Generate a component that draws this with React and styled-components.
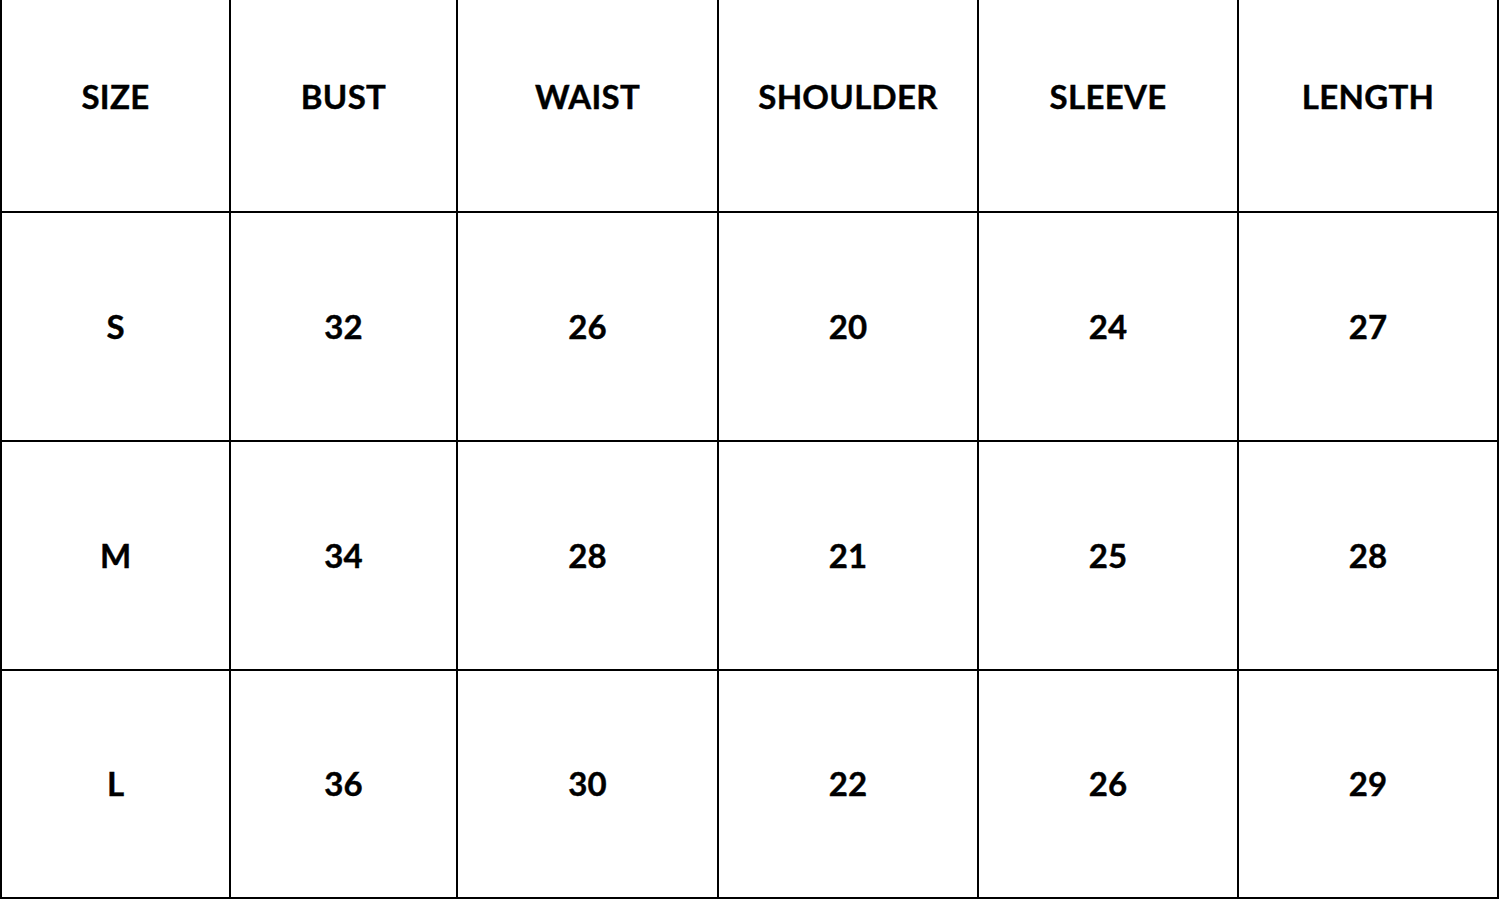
import React from 'react';
import styled, { createGlobalStyle } from 'styled-components';

const GlobalStyle = createGlobalStyle`
  html, body {
    margin: 0;
    padding: 0;
    background: #ffffff;
  }
  body {
    font-family: "Lato", "Liberation Sans", sans-serif;
    overflow: hidden;
  }
`;

const Chart = styled.div`
  display: grid;
  grid-template-columns: 227px 225px 259px 258px 258px 258px;
  grid-template-rows: 211px 227px 227px 226px;
  gap: 2px;
  padding: 0 2px 2px 2px;
  width: max-content;
  background: #000000;
`;

const Cell = styled.div`
  background: #ffffff;
  display: flex;
  align-items: center;
  justify-content: center;
  padding-bottom: ${(p) => (p.$head ? '20px' : '2px')};
  font-size: 33px;
  font-weight: 700;
  letter-spacing: ${(p) => (p.$head ? '0.3px' : '0')};
  color: #000000;
  -webkit-text-stroke: 0.4px #000000;
`;

const headers = ['SIZE', 'BUST', 'WAIST', 'SHOULDER', 'SLEEVE', 'LENGTH'];

const rows = [
  ['S', 32, 26, 20, 24, 27],
  ['M', 34, 28, 21, 25, 28],
  ['L', 36, 30, 22, 26, 29],
];

const App = () => (
  <>
    <GlobalStyle />
    <Chart>
      {headers.map((h) => (
        <Cell key={h} $head>
          {h}
        </Cell>
      ))}
      {rows.map((row) =>
        row.map((v, i) => <Cell key={`${row[0]}-${i}`}>{v}</Cell>)
      )}
    </Chart>
  </>
);

export default App;
